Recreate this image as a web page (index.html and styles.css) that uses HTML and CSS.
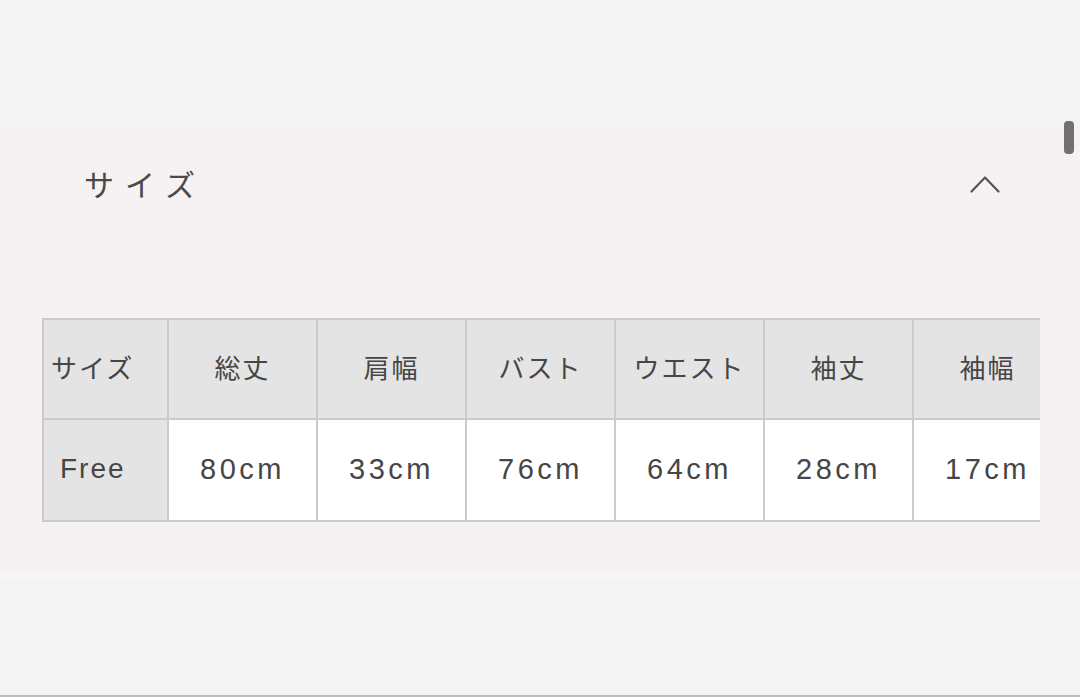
FILE: index.html
```html
<!DOCTYPE html>
<html lang="ja">
<head>
<meta charset="utf-8">
<title>サイズ</title>
<link rel="stylesheet" href="styles.css">
</head>
<body>
<div class="page">
  <section class="size-panel">
    <div class="panel-head">
      <h2 class="panel-title">サイズ</h2>
      <svg class="chevron" width="30" height="18" viewBox="0 0 30 18" aria-hidden="true">
        <path d="M1.5 16.5 L15 2.5 L28.5 16.5" fill="none" stroke="#555" stroke-width="2.2" stroke-linecap="round" stroke-linejoin="round"/>
      </svg>
    </div>
    <div class="table-wrap">
      <div class="size-table">
        <div class="cell head first">サイズ</div>
        <div class="cell head">総丈</div>
        <div class="cell head">肩幅</div>
        <div class="cell head">バスト</div>
        <div class="cell head">ウエスト</div>
        <div class="cell head">袖丈</div>
        <div class="cell head">袖幅</div>
        <div class="cell head num label">Free</div>
        <div class="cell num">80cm</div>
        <div class="cell num">33cm</div>
        <div class="cell num">76cm</div>
        <div class="cell num">64cm</div>
        <div class="cell num">28cm</div>
        <div class="cell num">17cm</div>
      </div>
    </div>
  </section>
  <div class="scroll-thumb"></div>
</div>
</body>
</html>
```

FILE: styles.css
```css
html, body {
  margin: 0;
  padding: 0;
}
body {
  background: #f4f4f4;
  font-family: "Noto Sans CJK JP", "Liberation Sans", sans-serif;
  color: #4a4a4a;
}
.page {
  position: relative;
  height: 697px;
  box-sizing: border-box;
  padding-top: 127px;
  border-bottom: 2px solid #bdbdbd;
  overflow: hidden;
}
.size-panel {
  background: #f6f1f2;
  height: 452px;
  box-sizing: border-box;
  padding-top: 36px;
  border-bottom: 6px solid #f7f6f6;
}
.panel-head {
  display: flex;
  align-items: center;
  justify-content: space-between;
  height: 40px;
  padding-left: 84px;
  padding-right: 80px;
}
.panel-title {
  margin: 0;
  font-size: 30px;
  font-weight: 400;
  letter-spacing: 11px;
  color: #4a4a4a;
  line-height: 40px;
}
.chevron {
  display: block;
  margin-top: 2px;
}
.table-wrap {
  margin-top: 115px;
  margin-left: 42px;
  width: 998px;
  overflow: hidden;
}
.size-table {
  display: grid;
  grid-template-columns: 123px repeat(6, 147px);
  grid-template-rows: 98px 100px;
  gap: 2px;
  padding: 2px;
  background: #cbcbcb;
  width: max-content;
}
.cell {
  background: #ffffff;
  display: flex;
  align-items: center;
  justify-content: center;
  font-size: 26px;
  color: #464646;
  letter-spacing: 2px;
}
.cell.head {
  background: #e4e4e4;
  padding-bottom: 6px;
  box-sizing: border-box;
}
.cell.first {
  justify-content: flex-start;
  padding-left: 7px;
}
.cell.num {
  font-family: "Liberation Sans", "Noto Sans CJK JP", sans-serif;
  font-size: 29px;
  letter-spacing: 3.5px;
  padding-bottom: 2px;
  box-sizing: border-box;
}
.cell.label {
  justify-content: flex-start;
  padding-left: 16px;
  letter-spacing: 2px;
  font-size: 28px;
}
.scroll-thumb {
  position: absolute;
  top: 121px;
  left: 1064px;
  width: 10px;
  height: 33px;
  border-radius: 4px;
  background: #717171;
}
```
